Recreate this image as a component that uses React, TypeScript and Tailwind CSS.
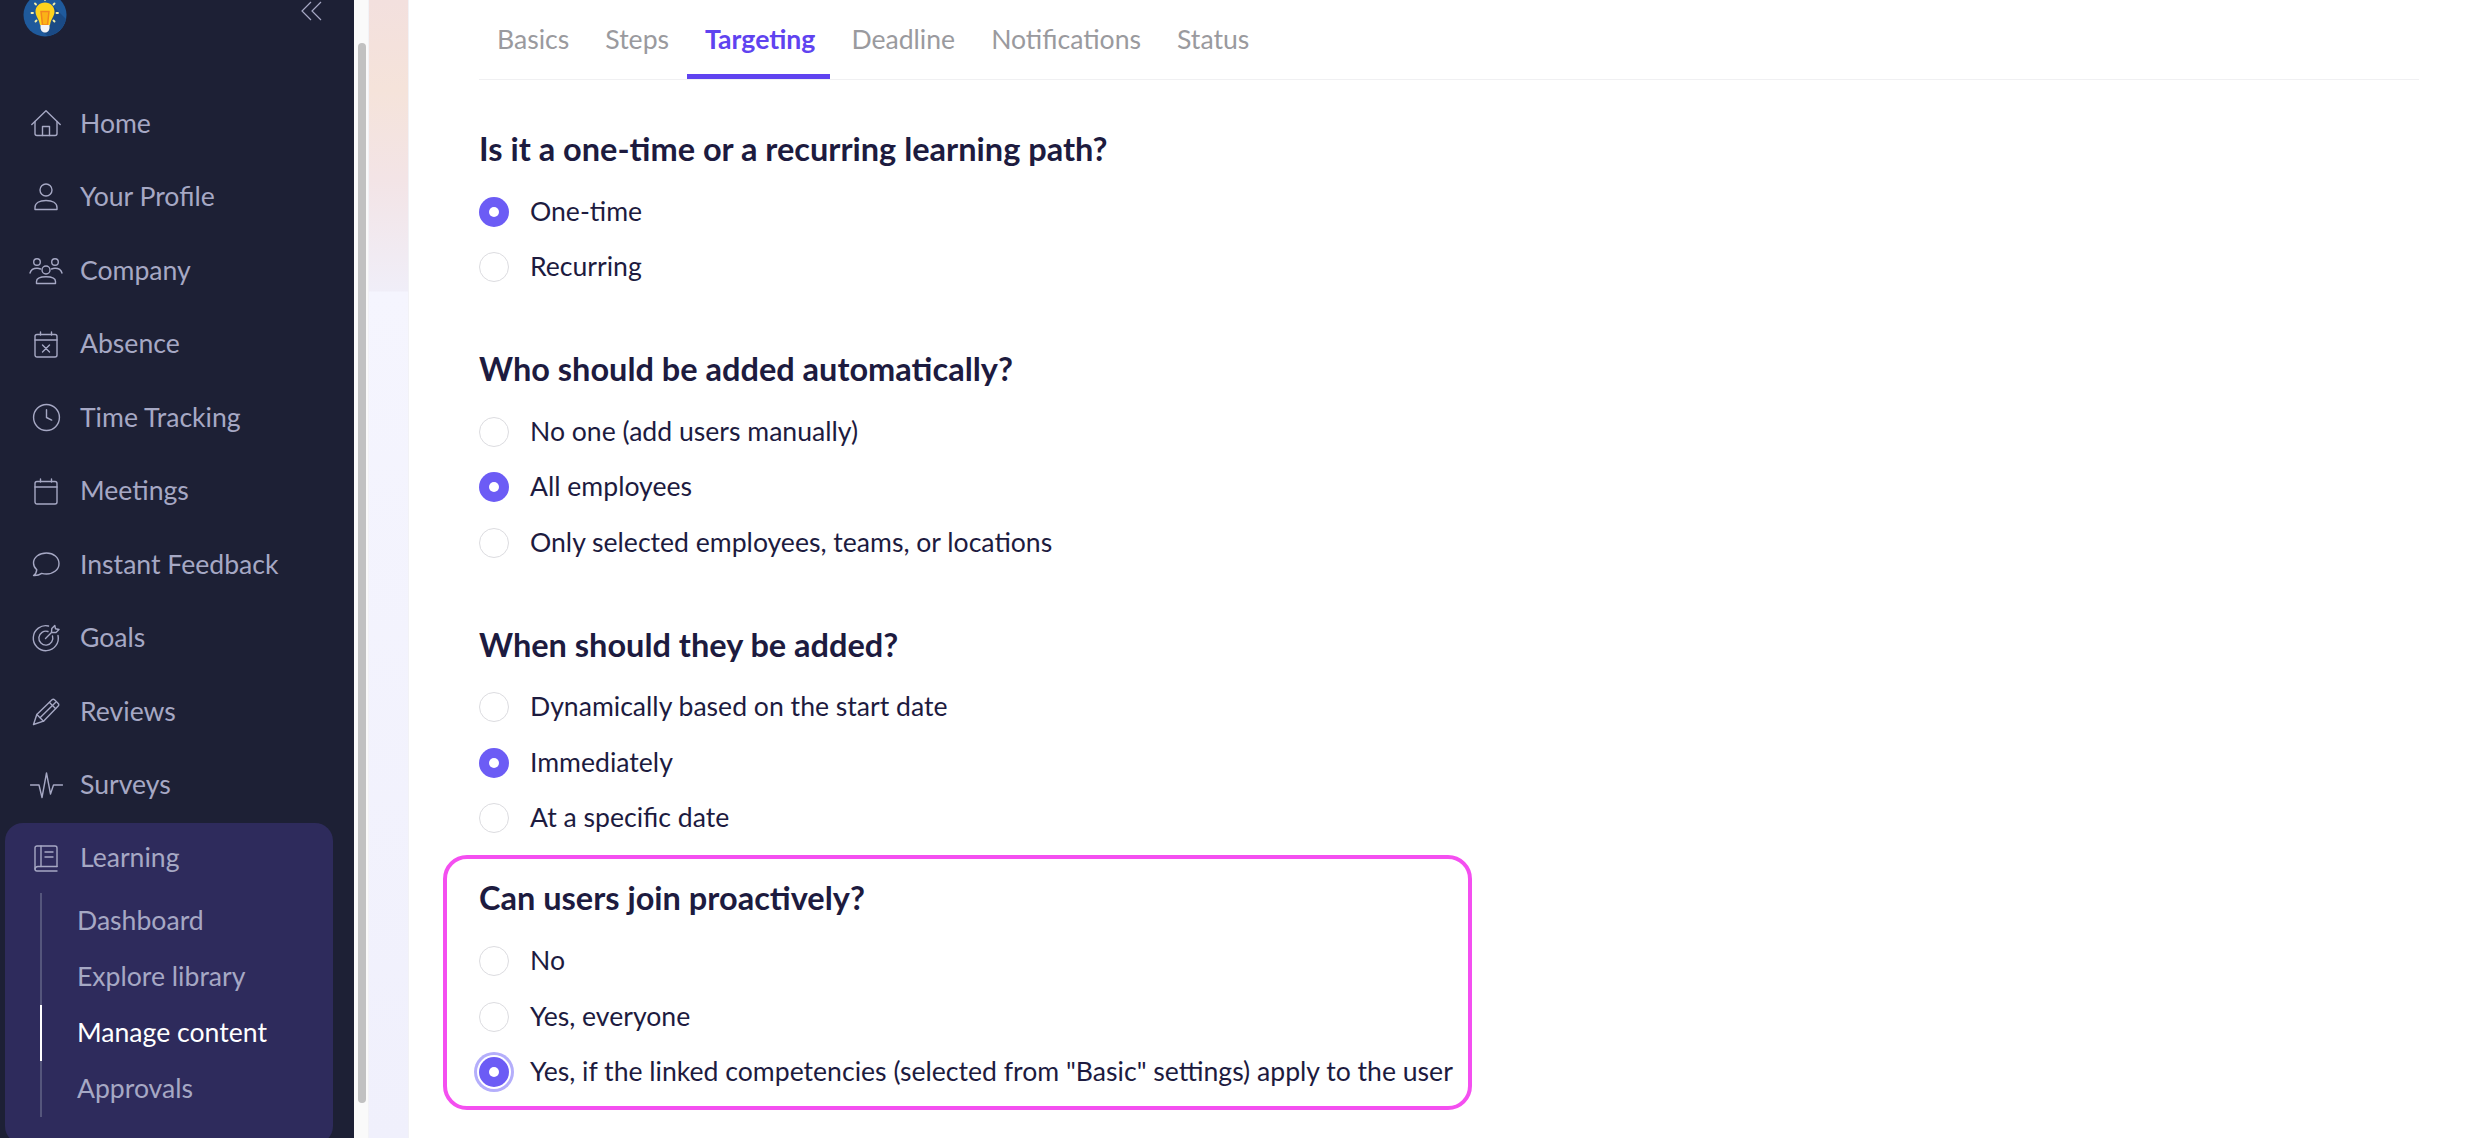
import React from 'react';
import { Clock } from 'lucide-react';

const font = { fontFamily: 'Lato, sans-serif' };

const iconProps = { fill: 'none', stroke: 'currentColor', strokeWidth: 1.4, strokeLinecap: 'round', strokeLinejoin: 'round' } as const;

const HomeIcon = () => (
  <svg width="30" height="27" viewBox="0 0 30 27" {...iconProps}>
    <path d="M0.800 14.500L15 0.800l14.200 13.700" />
    <path d="M4 11.500V23.500a2 2 0 0 0 2 2h18a2 2 0 0 0 2-2V11.500" />
    <path d="M11.500 25.500V16.500h7v9" />
  </svg>
);

const UserIcon = () => (
  <svg width="24" height="28" viewBox="0 0 24 28" {...iconProps}>
    <circle cx="12" cy="7" r="6" />
    <path d="M1 26.500v-2c0-4.500 4.500-7 11-7s11 2.500 11 7v2z" />
  </svg>
);

const TeamIcon = () => (
  <svg width="34" height="28" viewBox="0 0 34 28" {...iconProps}>
    <circle cx="8" cy="5" r="3.300" />
    <circle cx="26" cy="5" r="3.300" />
    <circle cx="17" cy="13" r="4" />
    <path d="M7.500 26.500v-2c0-3 3.500-4.800 9.500-4.800s9.500 1.800 9.500 4.800v2z" />
    <path d="M1 16c.8-3 3.500-4.800 7-4.800 1.300 0 2.500.3 3.500.8M33 16c-.8-3-3.500-4.800-7-4.800-1.300 0-2.500.3-3.500.8" />
  </svg>
);

const AbsenceIcon = () => (
  <svg width="24" height="27" viewBox="0 0 24 27" {...iconProps}>
    <rect x="1" y="3.500" width="22" height="22.500" rx="2" />
    <path d="M1 9h22M6.500 1v3M17.500 1v3" />
    <path d="M8.500 14l7 7M15.500 14l-7 7" />
  </svg>
);

const CalendarIcon = () => (
  <svg width="24" height="27" viewBox="0 0 24 27" {...iconProps}>
    <rect x="1" y="3.500" width="22" height="22.500" rx="2" />
    <path d="M1 9h22M6.500 1v3M17.500 1v3" />
  </svg>
);

const ChatIcon = () => (
  <svg width="28" height="25" viewBox="0 0 28 25" {...iconProps}>
    <path d="M14.500 1C7.500 1 1.500 5 1.500 11c0 2.800 1.300 5 3.300 6.700-.3 2.500-1.500 4.800-3.300 5.800 3.200.2 6-.6 8.200-2.100 1.500.4 3.100.6 4.800.6 7 0 12.500-4.300 12.500-10.500S21.500 1 14.500 1z" />
  </svg>
);

const GoalIcon = () => (
  <svg width="28" height="28" viewBox="0 0 28 28" {...iconProps}>
    <path d="M16.500 2a12.500 12.500 0 1 0 9.500 9.500" />
    <path d="M16 7.500a7 7 0 1 0 4.500 4.500" />
    <path d="M13.500 14.500l6-6M19.500 8.500l.3-4 3-3 .7 3.300 3.500.7-3 3z" />
  </svg>
);

const PencilIcon = () => (
  <svg width="28" height="28" viewBox="0 0 28 28" {...iconProps}>
    <path d="M1.500 26.500l3.300-10L20 1.800c.8-.8 1.800-.8 2.500 0l3.700 3.700c.8.800.8 1.800 0 2.500L11.500 23.200z" />
    <path d="M4.800 16.500l6.700 6.700M8 19.800L23.500 4.500M17.500 4.500l6 6" />
  </svg>
);

const PulseIcon = () => (
  <svg width="33" height="27" viewBox="0 0 33 27" {...iconProps}>
    <path d="M0.500 13H9l3 12.500L16.500 1 20.500 22l3-9H32.500" />
  </svg>
);

const BookIcon = () => (
  <svg width="24" height="27" viewBox="0 0 24 27" {...iconProps}>
    <path d="M23 21.500H4a3 3 0 0 0-3 2.500 2 2 0 0 0 2 2h20" />
    <path d="M1 24V3a2 2 0 0 1 2-2h18a2 2 0 0 1 2 2v18.500" />
    <path d="M7 1v20.500M11 7h8M11 12h8" />
  </svg>
);

const CollapseIcon = () => (
  <svg width="21" height="20" viewBox="0 0 21 20" fill="none" stroke="currentColor" strokeWidth="1.2">
    <path d="M10 1L1 10l9 9M20 1l-9 9 9 9" />
  </svg>
);

const Logo = () => (
  <svg width="44" height="44" viewBox="0 0 44 44" className="shrink-0">
    <circle cx="22" cy="22" r="21.500" fill="#1f5a9c" />
    <path d="M30 13L43 26A21.500 21.500 0 0 1 25 43L17 37z" fill="#1a4a85" />
    <g stroke="#f6f0a8" strokeWidth="1.800" strokeLinecap="round">
      <path d="M22 6v1M12 10.500l1 1M31.500 10.500l-1 1M8.500 20h1.500M33.500 20H35M12.500 28.500l1-1M31.500 28.500l-1-1" />
    </g>
    <path d="M22 9.500c-5.500 0-9.500 4-9.500 9 0 5 3.500 7 4.500 13.500h10c1-6.500 4.500-8.500 4.500-13.500 0-5-4-9-9.500-9z" fill="#fdd31d" />
    <path d="M18 18.500h8l-1.500 13.500h-5z" fill="#fbb216" stroke="#f2851f" strokeWidth="1.500" />
    <path d="M17.500 32h9v2.500c0 3-2 5-4.500 5s-4.500-2-4.500-5z" fill="#f4f4f6" />
  </svg>
);

const navItems = [
  { label: 'Home', icon: <HomeIcon /> },
  { label: 'Your Profile', icon: <UserIcon /> },
  { label: 'Company', icon: <TeamIcon /> },
  { label: 'Absence', icon: <AbsenceIcon /> },
  { label: 'Time Tracking', icon: <Clock size={31} strokeWidth={1.1} /> },
  { label: 'Meetings', icon: <CalendarIcon /> },
  { label: 'Instant Feedback', icon: <ChatIcon /> },
  { label: 'Goals', icon: <GoalIcon /> },
  { label: 'Reviews', icon: <PencilIcon /> },
  { label: 'Surveys', icon: <PulseIcon /> },
];

const subItems = ['Dashboard', 'Explore library', 'Manage content', 'Approvals'];

const tabs = ['Basics', 'Steps', 'Targeting', 'Deadline', 'Notifications', 'Status'];

const sections = [
  { title: 'Is it a one-time or a recurring learning path?', options: ['One-time', 'Recurring'], selected: 0 },
  {
    title: 'Who should be added automatically?',
    options: ['No one (add users manually)', 'All employees', 'Only selected employees, teams, or locations'],
    selected: 1,
  },
  {
    title: 'When should they be added?',
    options: ['Dynamically based on the start date', 'Immediately', 'At a specific date'],
    selected: 1,
  },
];

const Radio = ({ label, checked, focused }: { label: string; checked?: boolean; focused?: boolean }) => (
  <div className="flex items-center h-[55.5px] text-[26.6px] text-[#1d1b3f]">
    <span
      className={`w-[30px] h-[30px] rounded-full flex items-center justify-center shrink-0 mr-[21px] ${
        checked ? 'bg-[#6c5cf5]' : 'border border-[#dcdce0] bg-white'
      } ${focused ? 'ring-[3px] ring-offset-2 ring-[#b4aefb]' : ''}`}
    >
      {checked && <span className="w-[10px] h-[10px] rounded-full bg-white" />}
    </span>
    {label}
  </div>
);

const App = () => {
  return (
    <div className="flex h-screen overflow-hidden bg-white" style={font}>
      <aside className="w-[354px] shrink-0 bg-[#1d2035] flex flex-col -mt-[7px]">
        <div className="flex justify-between items-start pl-[23px] pr-[32px] h-[44px]">
          <Logo />
          <span className="text-[#a6a8c4] mt-[8px]">
            <CollapseIcon />
          </span>
        </div>
        <nav className="mt-[50px]">
          {navItems.map((item) => (
            <div key={item.label} className="flex items-center h-[73.5px] pl-[29px] text-[26.6px] text-[#a6a8c4]">
              <span className="w-[34px] flex justify-center mr-[17px]">{item.icon}</span>
              {item.label}
            </div>
          ))}
        </nav>
        <div className="mt-[1px] ml-[5px] mr-[21px] bg-[#2e2b5c] rounded-[18px] -mb-[6px] flex-1">
          <div className="flex items-center h-[70px] pl-[24px] text-[26.6px] text-[#a6a8c4]">
            <span className="w-[34px] flex justify-center mr-[17px]">
              <BookIcon />
            </span>
            Learning
          </div>
          <div className="ml-[35px]">
            {subItems.map((item) => {
              const active = item === 'Manage content';
              return (
                <div
                  key={item}
                  className={`flex items-center h-[56px] pl-[35px] border-l-2 text-[26.6px] ${
                    active ? 'border-white text-white' : 'border-[#55567c] text-[#a6a8c4]'
                  }`}
                >
                  {item}
                </div>
              );
            })}
          </div>
        </div>
      </aside>

      {/* scrollbar */}
      <div className="w-[14px] shrink-0 bg-[#fafafa] pt-[43px] pb-[35px] pl-[4px] pr-[2px]">
        <div className="h-full rounded-full bg-[#c1c1c1]" />
      </div>

      <div className="w-[41px] shrink-0 border-x border-[#f2f2f6] bg-[linear-gradient(180deg,#f3e0de_0px,#f5e3da_90px,#f3e4e6_180px,#f0eef8_291px,#f5f5fe_292px,#f0f0fc_100%)]" />

      <main className="flex-1 min-w-0 px-[70px]">
        <div className="flex border-b border-[#f0f0f2] h-[80px]">
          {tabs.map((tab) => {
            const active = tab === 'Targeting';
            return (
              <div
                key={tab}
                className={`h-[79px] flex items-center text-[26.6px] ${
                  active
                    ? 'pl-[18px] pr-[15px] mr-[3px] border-y-[5px] border-t-transparent border-b-[#5f43f0] text-[#5f43f0] font-bold'
                    : 'px-[18px] text-[#9a9a9e]'
                }`}
              >
                {tab}
              </div>
            );
          })}
        </div>
        <div className="pt-[46px] w-fit">
          {sections.map((section, s) => (
            <section key={section.title} className={s === 2 ? 'mb-[8.5px]' : 'mb-[51px]'}>
              <h2 className="text-[32.5px] font-bold text-[#1d1b3f] mb-[13px] leading-[45px]">{section.title}</h2>
              {section.options.map((opt, i) => (
                <Radio key={opt} label={opt} checked={i === section.selected} />
              ))}
            </section>
          ))}
          <section className="-ml-[36px] pl-[32px] pr-[15px] pt-[16px] pb-[6px] border-4 border-[#f44ff0] rounded-[24px]">
            <h2 className="text-[32.5px] font-bold text-[#1d1b3f] mb-[14px] leading-[45px]">Can users join proactively?</h2>
            <Radio label="No" />
            <Radio label="Yes, everyone" />
            <Radio label={'Yes, if the linked competencies (selected from "Basic" settings) apply to the user'} checked focused />
          </section>
        </div>
      </main>
    </div>
  );
};

export default App;
